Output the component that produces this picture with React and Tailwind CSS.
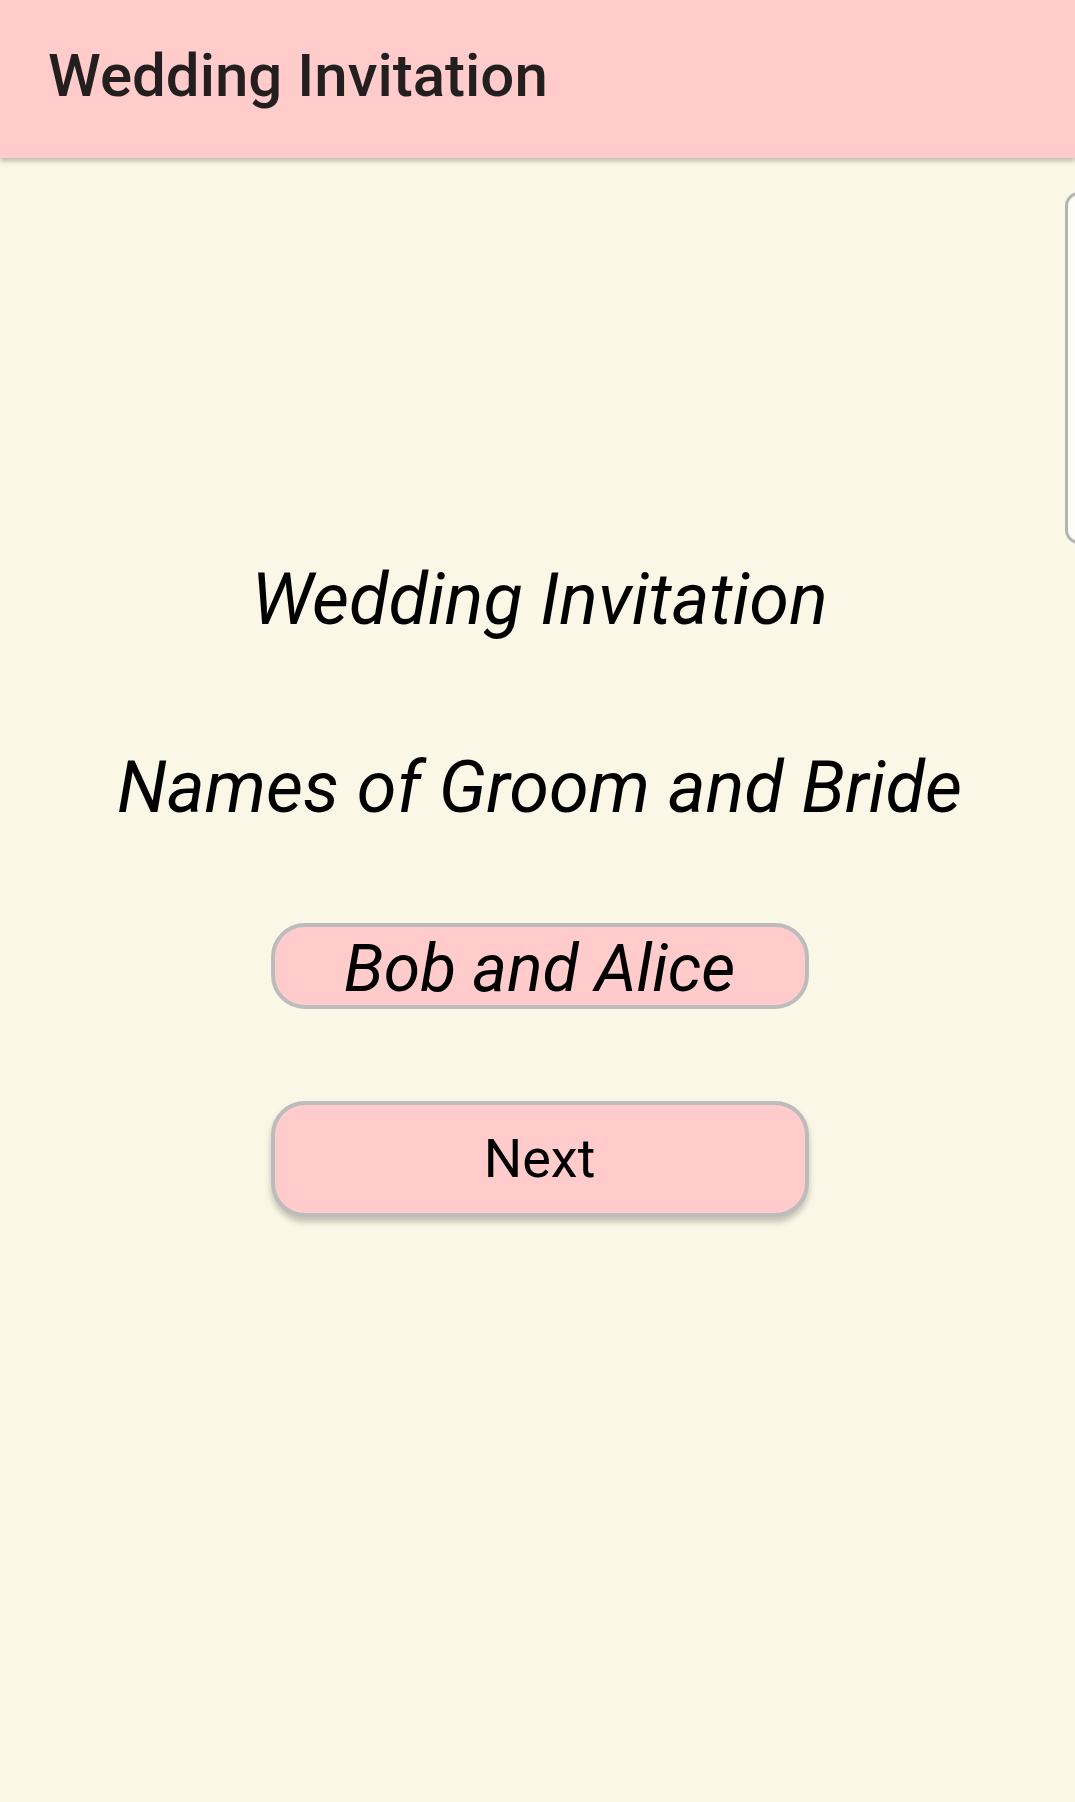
export default function App() {
  return (
    <div className="relative min-h-[1802px] w-full overflow-hidden bg-[#faf7e6] font-['Roboto',sans-serif]">
      {/* toolbar */}
      <header className="relative z-10 flex h-[158px] items-center bg-[#ffcbcb] pl-[48px] shadow-[0_3px_5px_rgba(0,0,0,0.25)]">
        <h1 className="text-[60px] font-medium leading-none text-[#231f1f] mb-[6px]">Wedding Invitation</h1>
      </header>

      {/* scroll handle peeking from the right edge */}
      <div className="absolute left-[1065px] top-[192px] h-[352px] w-[40px] rounded-[14px] border-[3px] border-[#b5b5b0] bg-[#fdfcf6]" />

      <main className="flex flex-col items-center pl-[4px]">
        <p className="mt-[406px] text-[72px] italic leading-none text-black">Wedding Invitation</p>
        <p className="mt-[116px] text-[72px] italic leading-none text-black">Names of Groom and Bride</p>

        <div className="mt-[99px] flex h-[86px] w-[538px] items-center justify-center rounded-[34px] border-[4px] border-[#bcbcbc] bg-[#ffcbcb] pt-[6px]">
          <span className="text-[66px] italic leading-none text-black">Bob and Alice</span>
        </div>

        <button className="mt-[92px] flex h-[116px] w-[538px] items-center justify-center rounded-[34px] border-[4px] border-[#bcbcbc] bg-[#ffcbcb] shadow-[0_5px_6px_rgba(0,0,0,0.22)]">
          <span className="text-[54px] leading-none text-black">Next</span>
        </button>
      </main>
    </div>
  );
}
